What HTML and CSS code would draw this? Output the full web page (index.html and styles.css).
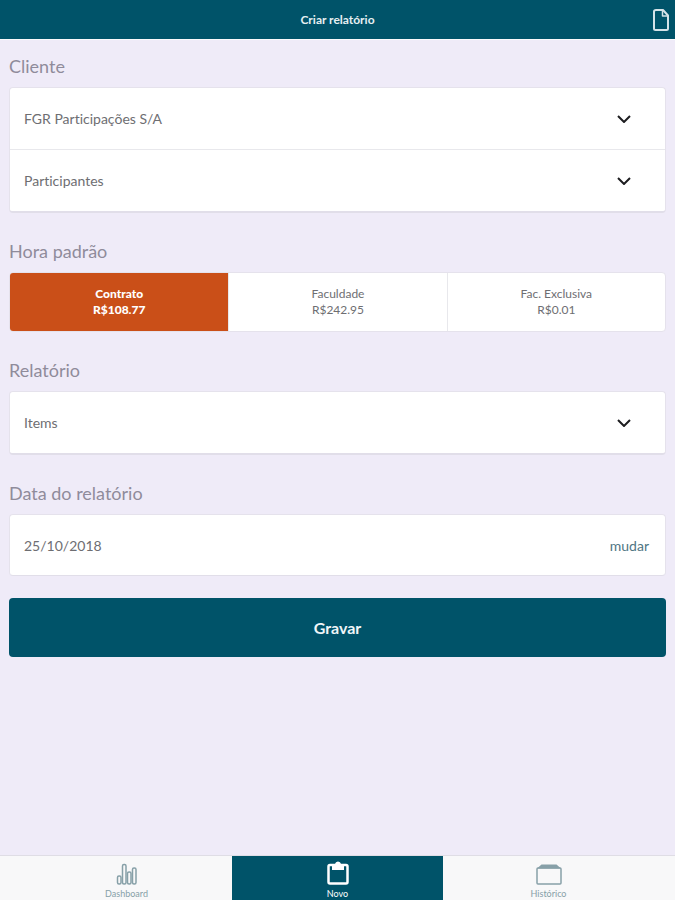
FILE: index.html
```
<!DOCTYPE html>
<html lang="pt-BR">
<head>
    <meta charset="UTF-8">
    <meta name="viewport" content="width=device-width, initial-scale=1.0">
    <title>Criar relatório</title>
    <link rel="stylesheet" href="styles.css">
</head>
<body>

    <header class="navbar">
        <h1 class="navbar-title">Criar relatório</h1>
        <button class="navbar-action" type="button" aria-label="Novo documento">
            <svg width="16" height="22" viewBox="0 0 16 22" fill="none" stroke="currentColor" stroke-width="2" stroke-linejoin="round">
                <path d="M3 1h7l5 5.500V19.500q0 1.500-1.500 1.500h-11Q1 21 1 19.500V2.500Q1 1 3 1z"/>
                <path d="M9.500 1.500V7H15" stroke-width="1.500"/>
            </svg>
        </button>
    </header>

    <main class="content">
        <form class="report-form">
            <!-- Cliente -->
            <section class="group">
                <h2 class="group-title">Cliente</h2>
                <div class="card">
                    <div class="row">
                        <select class="picker" aria-label="Cliente">
                            <option>FGR Participações S/A</option>
                        </select>
                        <svg class="chevron" width="14" height="8" viewBox="0 0 14 8"><path d="M1 1l6 6 6-6"/></svg>
                    </div>
                    <div class="row">
                        <select class="picker" aria-label="Participantes">
                            <option>Participantes</option>
                        </select>
                        <svg class="chevron" width="14" height="8" viewBox="0 0 14 8"><path d="M1 1l6 6 6-6"/></svg>
                    </div>
                </div>
            </section>

            <!-- Hora padrão -->
            <section class="group">
                <h2 class="group-title">Hora padrão</h2>
                <div class="segments">
                    <label class="segment">
                        <input type="radio" name="hora" value="contrato" checked>
                        <span>Contrato</span>
                        <span>R$108.77</span>
                    </label>
                    <label class="segment">
                        <input type="radio" name="hora" value="faculdade">
                        <span>Faculdade</span>
                        <span>R$242.95</span>
                    </label>
                    <label class="segment">
                        <input type="radio" name="hora" value="exclusiva">
                        <span>Fac. Exclusiva</span>
                        <span>R$0.01</span>
                    </label>
                </div>
            </section>

            <!-- Relatório -->
            <section class="group">
                <h2 class="group-title">Relatório</h2>
                <div class="card">
                    <div class="row">
                        <select class="picker" aria-label="Items">
                            <option>Items</option>
                        </select>
                        <svg class="chevron" width="14" height="8" viewBox="0 0 14 8"><path d="M1 1l6 6 6-6"/></svg>
                    </div>
                </div>
            </section>

            <!-- Data -->
            <section class="group">
                <label class="group-title" for="data">Data do relatório</label>
                <div class="card card-flat">
                    <div class="date-row">
                        <input class="date" id="data" type="text" value="25/10/2018" readonly>
                        <button class="change" type="button">mudar</button>
                    </div>
                </div>
            </section>

            <button class="submit" type="submit">Gravar</button>
        </form>
    </main>

    <nav class="tabs">
        <a class="tab" href="#dashboard">
            <svg width="22" height="22" viewBox="0 0 22 22" fill="none" stroke="currentColor" stroke-width="1.500">
                <rect x="1.500" y="13" width="3.500" height="8" rx="1.500"/>
                <rect x="6.500" y="1.500" width="3.500" height="19.500" rx="1.500"/>
                <rect x="11.500" y="9" width="3.500" height="12" rx="1.500"/>
                <rect x="16.500" y="5" width="3.500" height="16" rx="1.500"/>
            </svg>
            <span>Dashboard</span>
        </a>
        <a class="tab tab-active" href="#novo" aria-current="page">
            <svg width="22" height="24" viewBox="0 0 22 24">
                <rect x="1.500" y="4" width="19" height="18.500" rx="1.500" fill="none" stroke="currentColor" stroke-width="2.500"/>
                <path d="M5 9V5q0-2 2-2h1q.5-2.500 3-2.500T14 3h1q2 0 2 2v4z" fill="currentColor"/>
            </svg>
            <span>Novo</span>
        </a>
        <a class="tab" href="#historico">
            <svg width="26" height="22" viewBox="0 0 26 22">
                <rect x="1" y="5" width="24" height="16" rx="1" fill="none" stroke="currentColor" stroke-width="1.500"/>
                <path d="M1 5.500L5.500 1.500h15L25 5.500z" fill="currentColor"/>
            </svg>
            <span>Histórico</span>
        </a>
    </nav>

</body>
</html>
```
FILE: styles.css
```
* {
    box-sizing: border-box;
}

body {
    display: flex;
    flex-direction: column;
    min-height: 100vh;
    margin: 0;
    background: #efebf8;
    color: #6e6e72;
    font-family: Lato, "Open Sans", sans-serif;
    font-size: 14px;
    font-variant-ligatures: none;
}

button,
input,
select {
    font: inherit;
    font-variant-ligatures: none;
    color: inherit;
}

button {
    border: 0;
    cursor: pointer;
}

/* Barra superior */
.navbar {
    display: grid;
    grid-template-columns: 1fr auto 1fr;
    align-items: center;
    height: 40px;
    padding: 0 6px;
    background: #005369;
    border-bottom: 1px solid #fafafc;
    color: #e6eff2;
}

.navbar-title {
    grid-column: 2;
    margin: 0;
    font-size: 12px;
    font-weight: bold;
}

.navbar-action {
    display: flex;
    justify-self: end;
    padding: 0;
    background: none;
    color: #d5e3e8;
}

/* Formulário */
.content {
    flex: 1;
    padding: 14px 9px 24px;
}

.group {
    margin-bottom: 26px;
}

.group:last-of-type {
    margin-bottom: 22px;
}

.group-title {
    display: block;
    margin: 0 0 9px;
    color: #8f8b9b;
    font-size: 18px;
    font-weight: normal;
    line-height: 24px;
}

.card {
    background: #fff;
    border: 1px solid #e5e2ec;
    border-bottom: 2px solid #e1dee9;
    border-radius: 4px;
}

.card-flat {
    border-bottom-width: 1px;
}

.row {
    display: grid;
    align-items: center;
    height: 61px;
}

.row + .row {
    height: 62px;
    border-top: 1px solid #e8e8ec;
}

.picker {
    grid-area: 1 / 1;
    width: 100%;
    height: 100%;
    padding: 0 48px 0 14px;
    border: 0;
    background: none;
    appearance: none;
}

.chevron {
    grid-area: 1 / 1;
    justify-self: end;
    margin-right: 34px;
    fill: none;
    stroke: #1d1d20;
    stroke-width: 2;
    pointer-events: none;
}

/* Valores por hora */
.segments {
    display: grid;
    grid-template-columns: repeat(3, 1fr);
    overflow: hidden;
    background: #fff;
    border: 1px solid #e5e2ec;
    border-radius: 4px;
}

.segment {
    position: relative;
    display: flex;
    flex-direction: column;
    align-items: center;
    justify-content: center;
    height: 58px;
    font-size: 12px;
    line-height: 16px;
    cursor: pointer;
}

.segment + .segment {
    border-left: 1px solid #e8e8ec;
}

.segment input {
    position: absolute;
    opacity: 0;
}

.segment:has(input:checked) {
    background: #ca4f18;
    color: #fff;
    font-weight: 900;
}

/* Data */
.date-row {
    display: flex;
    align-items: center;
    height: 60px;
    padding: 0 16px 0 14px;
}

.date {
    flex: 1;
    min-width: 0;
    padding: 0;
    border: 0;
    background: none;
}

.change {
    padding: 0;
    background: none;
    color: #4f7583;
}

.submit {
    display: block;
    width: 100%;
    height: 59px;
    border-radius: 4px;
    background: #005369;
    color: #f0f6f8;
    font-size: 16px;
    font-weight: bold;
}

/* Abas */
.tabs {
    display: flex;
    height: 45px;
    padding: 0 21px;
    background: #f8f8f9;
    border-top: 1px solid #dfdde5;
}

.tab {
    display: flex;
    flex: 1;
    flex-direction: column;
    align-items: center;
    justify-content: flex-end;
    gap: 3px;
    padding-bottom: 1px;
    color: #87a0a8;
    font-size: 9px;
    line-height: 11px;
    text-decoration: none;
}

.tab-active {
    background: #005369;
    color: #fff;
}
```
